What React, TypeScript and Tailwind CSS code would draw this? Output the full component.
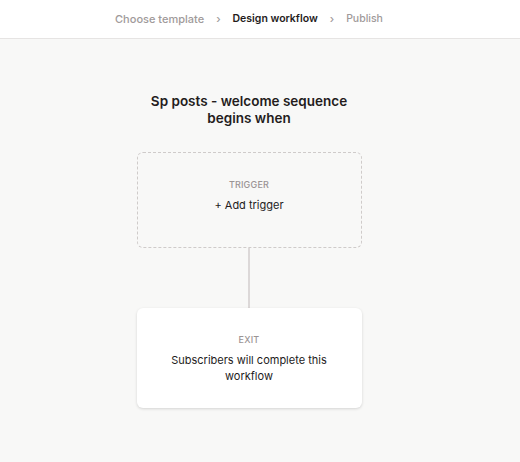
import React from "react";

export default function App() {
  return (
    <div className="w-[520px] h-[462px] bg-[#f8f8f7] flex flex-col" style={{ fontFamily: "Inter, 'Noto Sans', sans-serif" }}>
      <div className="h-[39px] bg-white border-b border-[#e6e4e3] flex items-center justify-center gap-[12px] text-[11px] font-medium pr-[22px]">
        <span className="text-[#a09a9a]">Choose template</span>
        <span className="text-[#a09a9a] text-[11px]">›</span>
        <span className="text-[#241c1c] font-semibold text-[10.5px]">Design workflow</span>
        <span className="text-[#a09a9a] text-[11px]">›</span>
        <span className="text-[#a09a9a] text-[10.5px]">Publish</span>
      </div>
      <div className="flex flex-col items-center pt-[54px] pr-[22px]">
        <div className="text-[13.5px] leading-[17px] font-semibold text-[#241c1c] text-center w-[230px]">
          Sp posts - welcome sequence begins when
        </div>
        <div className="mt-[25px] w-[225px] h-[96px] rounded-[6px] border border-dashed border-[#cfcbca] flex flex-col items-center pt-[25px]">
          <div className="text-[9px] text-[#9b9494] tracking-[0.02em] font-medium">TRIGGER</div>
          <div className="text-[11px] text-[#241c1c] mt-[5px]">+ Add trigger</div>
        </div>
        <div className="w-[2px] h-[60px] bg-[#dcd8d8]"></div>
        <div className="w-[225px] h-[100px] rounded-[6px] bg-white shadow-[0_1px_3px_rgba(0,0,0,0.15)] flex flex-col items-center pt-[25px]">
          <div className="text-[9px] text-[#9b9494] tracking-[0.02em] font-medium">EXIT</div>
          <div className="text-[11px] leading-[16px] text-[#241c1c] mt-[5px] text-center w-[170px]">
            Subscribers will complete this workflow
          </div>
        </div>
      </div>
    </div>
  );
}
